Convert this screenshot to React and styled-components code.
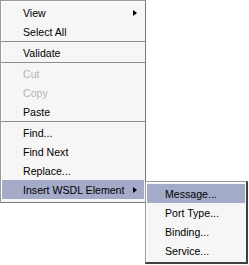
import React from 'react';
import styled, { createGlobalStyle } from 'styled-components';

const GlobalStyle = createGlobalStyle`
    html, body {
        margin: 0;
        padding: 0;
        background: #ffffff;
    }
    body {
        font-family: "Liberation Sans", Arial, sans-serif;
        font-size: 10.6px;
        color: #000;
    }
`;

const Page = styled.div`
    position: relative;
    width: 249px;
    height: 265px;
    overflow: hidden;
`;

const Menu = styled.div`
    display: flex;
    flex-direction: column;
    width: 144px;
    padding: 2px 0 3px 0;
    background: #f6f6f6;
    border: 1px solid #9a9a9a;
    border-right-color: #7a7a7a;
    border-bottom-color: #7a7a7a;
    box-shadow: inset 1px 1px 0 #ffffff;
`;

const SubMenu = styled(Menu)`
    position: absolute;
    left: 145px;
    top: 181px;
    width: 100px;
    padding: 2px 0 2px 0;
    border-right: 2px solid #404040;
    border-bottom: 2px solid #404040;
`;

const Item = styled.div`
    display: flex;
    align-items: center;
    height: 19px;
    padding: 0 7px 0 ${p => p.$indent || 21}px;
    margin: 0 1px;
    white-space: nowrap;
    color: ${p => (p.$disabled ? '#b4b4b4' : '#000')};
    background: ${p => (p.$active ? '#a3abc9' : 'transparent')};
`;

const Label = styled.span`
    flex: 1;
`;

const Arrow = styled.span`
    width: 0;
    height: 0;
    border-top: 3.5px solid transparent;
    border-bottom: 3.5px solid transparent;
    border-left: 4px solid #000;
`;

const Separator = styled.div`
    height: 1px;
    margin: 0 0 1px 0;
    background: #8e8e8e;
`;

export default function App() {
    return (
        <Page>
            <GlobalStyle />
            <Menu>
                <Item>
                    <Label>View</Label>
                    <Arrow />
                </Item>
                <Item><Label>Select All</Label></Item>
                <Separator />
                <Item><Label>Validate</Label></Item>
                <Separator />
                <Item $disabled><Label>Cut</Label></Item>
                <Item $disabled><Label>Copy</Label></Item>
                <Item><Label>Paste</Label></Item>
                <Separator />
                <Item><Label>Find...</Label></Item>
                <Item><Label>Find Next</Label></Item>
                <Item><Label>Replace...</Label></Item>
                <Item $active>
                    <Label>Insert WSDL Element</Label>
                    <Arrow />
                </Item>
            </Menu>
            <SubMenu>
                <Item $active $indent={18}><Label>Message...</Label></Item>
                <Item $indent={18}><Label>Port Type...</Label></Item>
                <Item $indent={18}><Label>Binding...</Label></Item>
                <Item $indent={18}><Label>Service...</Label></Item>
            </SubMenu>
        </Page>
    );
}
